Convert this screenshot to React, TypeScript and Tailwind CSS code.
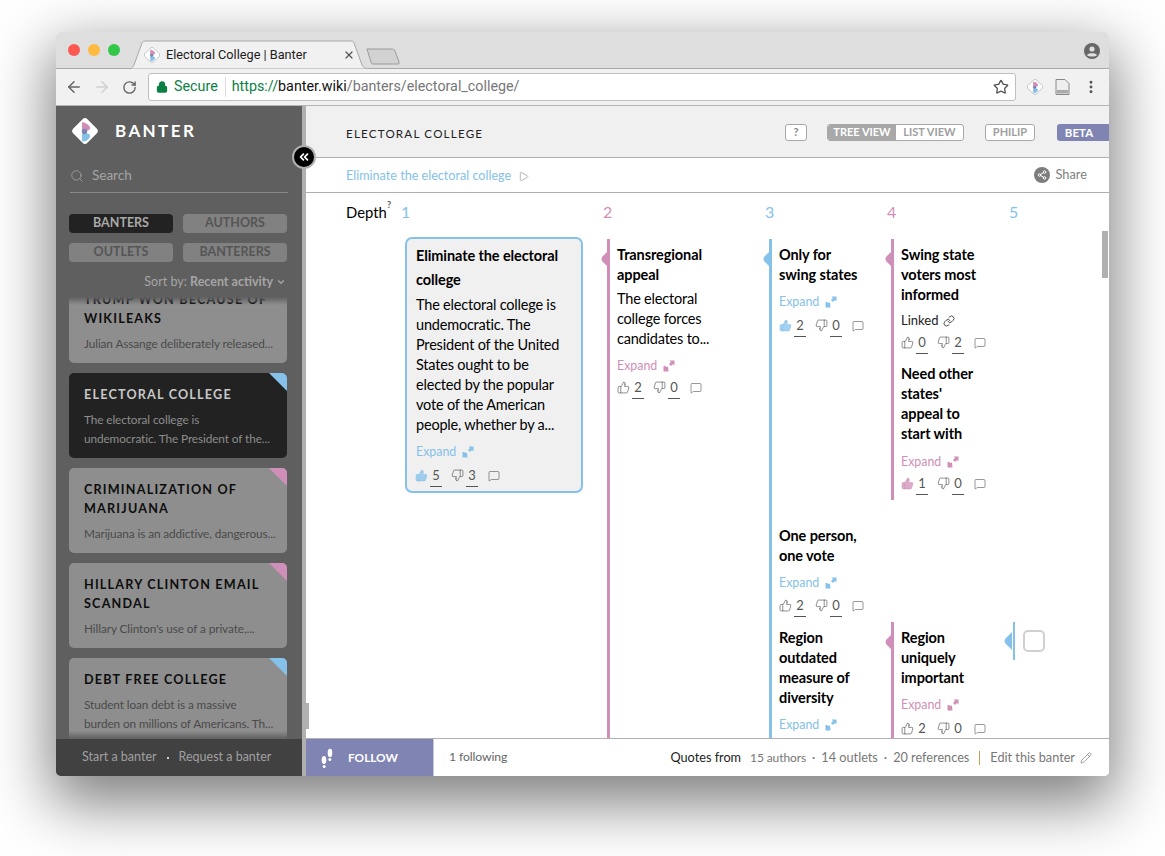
import React from "react";
import { ArrowLeft, ArrowRight, RotateCw, Lock, Star, MoreVertical, X, Search, ChevronDown, ThumbsUp, ThumbsDown, MessageSquare, Pencil, Link, Play, ChevronsLeft, Share2 } from "lucide-react";

const BLUE = "#85c1e9";
const PINK = "#cf8fb8";

function Logo({ size = 30 }: { size?: number }) {
  return (
    <svg width={size} height={size} viewBox="0 0 30 30">
      <rect x="5" y="5" width="20" height="20" rx="3.5" transform="rotate(45 15 15)" fill="#fff" stroke="#b5b5b5" strokeWidth={size < 25 ? 1.2 : 0} />
      <path d="M12 6.500 C14 5.500 18 8 20 11 C21 13 19 14.500 16 15 H12 Z" fill={PINK} />
      <path d="M12 17.500 H17 C20 17.500 21 20 19 22.500 C17 25 13 26.500 12 25 Z" fill={BLUE} />
      <circle cx="14.500" cy="15.500" r="2.700" fill="#7f84b3" />
    </svg>
  );
}

function ExpandIcon({ color }: { color: string }) {
  return (
    <svg width="12" height="12" viewBox="0 0 12 12" className="ml-[6px]">
      <path d="M6.500 0.500 H11.500 V5.500 L10 4 L8 6 L6 4 L8 2 Z" fill={color} />
      <path d="M0.500 6 L2 6 L3.500 7 L5 6.500 L5.500 11.500 H0.500 Z" fill={color} />
    </svg>
  );
}

function Expand({ color }: { color: string }) {
  return (
    <div className="flex items-center h-[20px] pt-[2px] text-[12.4px] leading-[18px]" style={{ color }}>
      Expand
      <ExpandIcon color={color} />
    </div>
  );
}

function Stats({ up, down, like, plain }: { up: number; down: number; like?: string; plain?: boolean }) {
  const num = plain
    ? "w-[12px] text-center text-[13px] leading-[16px] text-[#555]"
    : "w-[12px] text-center text-[13px] leading-[16px] text-[#555] border-b border-[#555] pb-[3px]";
  return (
    <div className="flex items-start h-[22px] text-[#555]">
      <ThumbsUp size={13} strokeWidth={1.1} className="mt-[2px]" color={like ? like : "#444"} fill={like ? like : "none"} fillOpacity={0.75} />
      <div className="ml-[2px] w-[12px] flex justify-center">
        <span className={num}>{up}</span>
      </div>
      <ThumbsDown size={13} strokeWidth={1.1} className="mt-[2px] ml-[9px]" color="#444" />
      <div className="ml-[2px] w-[12px] flex justify-center">
        <span className={num}>{down}</span>
      </div>
      <MessageSquare size={12} strokeWidth={1.1} className="mt-[3px] ml-[10px]" color="#444" />
    </div>
  );
}

function Title({ children }: { children: React.ReactNode }) {
  return <div className="text-[14.5px] tracking-[-0.1px] leading-[20px] font-bold text-black whitespace-nowrap">{children}</div>;
}

function Notch({ color, top = 11 }: { color: string; top?: number }) {
  return (
    <svg width="8" height="18" viewBox="0 0 8 18" className="absolute left-[-9px]" style={{ top }}>
      <path d="M8 0 V18 L1 11 Q0 9 1 7 Z" fill={color} />
    </svg>
  );
}

function SideCard({ title, body, active, corner }: { title: React.ReactNode; body: React.ReactNode; active?: boolean; corner?: string }) {
  return (
    <div className={`relative shrink-0 w-[218px] h-[85px] rounded-[5px] px-[15px] pt-[12px] overflow-hidden whitespace-nowrap ${active ? "bg-[#222222]" : "bg-[#8e8e8e]"}`}>
      <div className={`text-[12.6px] leading-[19px] font-bold tracking-[1.2px] ${active ? "text-[#c8c8c8]" : "text-[#0d0d0d]"}`}>{title}</div>
      <div className={`mt-[6px] text-[11.8px] tracking-[-0.1px] leading-[19px] ${active ? "text-[#8d8d8d]" : "text-[#4a4a4a]"}`}>{body}</div>
      {corner && (
        <svg width="18" height="18" viewBox="0 0 18 18" className="absolute top-0 right-0">
          <path d="M0 0 H18 V18 Z" fill={corner} />
        </svg>
      )}
    </div>
  );
}

function SideTab({ label, active }: { label: string; active?: boolean }) {
  return (
    <div className={`h-[19px] rounded-[4px] flex items-center justify-center text-[12.5px] font-bold ${active ? "bg-[#222222] text-[#a9a9a9]" : "bg-[#818181] text-[#555555]"}`}>
      {label}
    </div>
  );
}

export default function App() {
  return (
    <div className="w-[1165px] h-[856px] bg-white overflow-hidden pt-[32px] pl-[56px]" style={{ fontFamily: "Lato, sans-serif" }}>
      <div className="relative w-[1053px] h-[744px] rounded-[5px] overflow-hidden shadow-[0_22px_60px_6px_rgba(0,0,0,0.5)] flex flex-col">
        {/* tab strip */}
        <div className="h-[37px] shrink-0 bg-[#dedede] flex items-start border-b border-[#a8a8a8] relative">
          <div className="flex items-center gap-[8px] pl-[12px] pt-[12px]">
            <span className="w-[12px] h-[12px] rounded-full bg-[#fc5753]" />
            <span className="w-[12px] h-[12px] rounded-full bg-[#fdbc40]" />
            <span className="w-[12px] h-[12px] rounded-full bg-[#33c748]" />
          </div>
          <div className="absolute left-[72px] top-[8px] w-[242px] h-[29px]">
            <svg width="242" height="29" viewBox="0 0 242 29" className="absolute inset-0">
              <path d="M0 29 C4 29 5 27 6 25 L14 3 C15 1 16 1 18 1 H222 C224 1 225 1 226 3 L234 25 C235 27 237 29 242 29 Z" fill="#f1f1f1" stroke="#a8a8a8" />
            </svg>
            <div className="relative flex items-center h-[29px] pl-[15px]">
              <Logo size={18} />
              <span className="ml-[5px] text-[12.7px] text-[#1c1c1c] whitespace-nowrap" style={{ fontFamily: "Roboto, sans-serif" }}>Electoral College | Banter</span>
              <X size={12} strokeWidth={2.4} color="#555" className="absolute left-[215px] top-[9px]" />
            </div>
          </div>
          <svg width="36" height="18" viewBox="0 0 36 18" className="absolute left-[310px] top-[16px]">
            <path d="M1 1 H25 C27 1 28 1 29 3 L33 14 C33.500 16 33 16 31 16 H8 C6 16 6 16 5 14 Z" fill="#d2d2d2" stroke="#9a9a9a" />
          </svg>
          <svg width="16" height="16" viewBox="0 0 16 16" className="absolute right-[9px] top-[11px]">
            <circle cx="8" cy="8" r="8" fill="#666" />
            <circle cx="8" cy="6" r="2.600" fill="#dedede" />
            <path d="M3 12 C3.500 9.800 12.500 9.800 13 12 C11.500 14 4.500 14 3 12 Z" fill="#dedede" />
          </svg>
        </div>
        {/* toolbar */}
        <div className="h-[37px] shrink-0 bg-[#f1f1f1] border-b border-[#b5b5b5] flex items-center">
          <ArrowLeft size={18} strokeWidth={2} color="#666" className="ml-[9px]" />
          <ArrowRight size={18} strokeWidth={2} color="#cfcfcf" className="ml-[10px]" />
          <RotateCw size={15} strokeWidth={2.2} color="#666" className="ml-[11px]" />
          <div className="ml-[11px] w-[868px] h-[28px] bg-white rounded-[3px] border border-[#bfbfbf] flex items-center text-[14.3px] whitespace-nowrap" style={{ fontFamily: "Roboto, sans-serif" }}>
            <Lock size={12} strokeWidth={2.6} color="#0b8043" fill="#0b8043" className="ml-[7px]" />
            <span className="ml-[6px] text-[#0b8043]">Secure</span>
            <span className="ml-[7px] mr-[6px] w-px h-[20px] bg-[#dcdcdc]" />
            <span className="text-[#0b8043]">https://</span>
            <span className="text-[#111]">banter.wiki</span>
            <span className="text-[#777]">/banters/electoral_college/</span>
            <Star size={16} strokeWidth={2} color="#555" className="ml-auto mr-[6px]" />
          </div>
          <div className="ml-[10px]"><Logo size={18} /></div>
          <svg width="15" height="16" viewBox="0 0 15 16" className="ml-[11px]">
            <path d="M1 .5 H10 L14 4.500 V15.500 H1 Z" fill="#eee" stroke="#888" />
            <rect x="2" y="11" width="11" height="3.500" fill="#aaa" />
          </svg>
          <MoreVertical size={16} strokeWidth={2.4} color="#555" className="ml-[13px]" />
        </div>
        {/* app */}
        <div className="flex-1 min-h-0 flex relative">
          {/* sidebar */}
          <div className="w-[250px] shrink-0 bg-[#5f5f5f] border-r-[4px] border-[#b0b0b0] flex flex-col">
            <div className="h-[50px] shrink-0 flex items-center pl-[14px]">
              <Logo size={30} />
              <span className="ml-[15px] text-[17px] font-bold tracking-[2.4px] text-white">BANTER</span>
            </div>
            <div className="mx-[14px] h-[37px] pt-[3px] shrink-0 border-b border-[#8a8a8a] flex items-center text-[#a5a5a5] text-[13.5px]">
              <Search size={14} strokeWidth={1.4} />
              <span className="ml-[8px]">Search</span>
            </div>
            <div className="ml-[13px] mr-[15px] mt-[21px] grid grid-cols-2 gap-x-[10px] gap-y-[10px] shrink-0">
              <SideTab label="BANTERS" active />
              <SideTab label="AUTHORS" />
              <SideTab label="OUTLETS" />
              <SideTab label="BANTERERS" />
            </div>
            <div className="h-[20px] mt-[10px] shrink-0 pr-[16px] flex items-center justify-end text-[12.5px] text-[#a5a5a5] whitespace-nowrap">
              Sort by:&nbsp;<span className="font-bold">Recent activity</span>
              <ChevronDown size={10} strokeWidth={3} className="ml-[3px]" />
            </div>
            <div className="relative flex-1 min-h-0 mt-[5px] overflow-hidden px-[13px]">
              <div className="flex flex-col gap-[10px] mt-[-19px]">
                <SideCard title={<>TRUMP WON BECAUSE OF<br />WIKILEAKS</>} body="Julian Assange deliberately released..." />
                <SideCard active corner={BLUE} title="ELECTORAL COLLEGE" body={<>The electoral college is<br />undemocratic. The President of the...</>} />
                <SideCard corner={PINK} title={<>CRIMINALIZATION OF<br />MARIJUANA</>} body="Marijuana is an addictive, dangerous..." />
                <SideCard corner={PINK} title={<>HILLARY CLINTON EMAIL<br />SCANDAL</>} body="Hillary Clinton's use of a private,..." />
                <SideCard corner={BLUE} title="DEBT FREE COLLEGE" body={<>Student loan debt is a massive<br />burden on millions of Americans. Th...</>} />
              </div>
              <div className="absolute top-0 inset-x-0 h-[8px] bg-gradient-to-b from-[#5f5f5f] to-transparent" />
              <div className="absolute bottom-0 inset-x-0 h-[8px] bg-gradient-to-t from-[#5f5f5f] to-transparent" />
            </div>
            <div className="h-[37px] shrink-0 bg-[#414141] flex items-center pl-[26px] text-[12.5px] text-[#a0a0a0] whitespace-nowrap">
              Start a banter
              <span className="mx-[10px] w-[2px] h-[2px] rounded-full bg-white" />
              Request a banter
            </div>
          </div>
          {/* main */}
          <div className="flex-1 min-w-0 flex flex-col bg-white relative">
            <div className="h-[52px] shrink-0 bg-[#f0f0f0] border-b border-[#b0b0b0] flex items-center pl-[40px] pt-[2px]">
              <span className="text-[11.6px] tracking-[1.2px] mt-[2px] text-[#222] whitespace-nowrap">ELECTORAL COLLEGE</span>
              <div className="ml-auto flex items-center text-[11px] font-bold whitespace-nowrap">
                <div className="w-[22px] h-[17px] border border-[#a8a8a8] bg-white rounded-[3px] text-[#888] flex items-center justify-center">?</div>
                <div className="ml-[20px] w-[137px] h-[17px] border border-[#a8a8a8] rounded-[3px] bg-white flex overflow-hidden">
                  <div className="w-[68px] bg-[#a8a8a8] text-white flex items-center justify-center">TREE VIEW</div>
                  <div className="flex-1 text-[#a0a0a0] flex items-center justify-center">LIST VIEW</div>
                </div>
                <div className="ml-[21px] w-[50px] h-[17px] border border-[#a8a8a8] bg-white rounded-[3px] text-[#a0a0a0] flex items-center justify-center">PHILIP</div>
                <div className="ml-[22px] w-[52px] h-[17px] pr-[8px] text-[11.5px] bg-[#7f84b3] rounded-l-[3px] text-white flex items-center justify-center">BETA</div>
              </div>
            </div>
            <div className="h-[35px] shrink-0 border-b border-[#b0b0b0] flex items-center pl-[40px] pr-[22px] text-[12.6px]">
              <span className="whitespace-nowrap mt-[3px]" style={{ color: BLUE }}>Eliminate the electoral college</span>
              <Play size={11} strokeWidth={1.2} color="#777" className="ml-[7px] mt-[2px]" />
              <div className="ml-auto flex items-center text-[#808080] text-[12.8px]">
                <span className="w-[16px] h-[16px] rounded-full bg-[#7d7d7d] flex items-center justify-center">
                  <Share2 size={10} strokeWidth={2.4} color="#fff" />
                </span>
                <span className="ml-[6px]">Share</span>
              </div>
            </div>
            <div className="flex-1 min-h-0 overflow-hidden relative">
              <div className="h-[38px] flex items-center pl-[40px] text-[16px] text-black whitespace-nowrap">
                <span className="w-[55px] relative text-[14.8px]">Depth<span className="absolute left-[41px] top-[-2px] text-[9px] leading-[12px] font-bold text-[#555]">?</span></span>
                <span className="w-[202px] text-[#85c1e9]">1</span>
                <span className="w-[162px] text-[#cf8fb8]">2</span>
                <span className="w-[122px] text-[#85c1e9]">3</span>
                <span className="w-[122px] text-[#cf8fb8]">4</span>
                <span className="text-[#85c1e9]">5</span>
              </div>
              <div className="flex items-start pl-[99px] mt-[6px]">
                {/* depth 1 */}
                <div className="w-[178px] h-[256px] shrink-0 rounded-[7px] border-[2px] border-[#85c1e9] bg-[#f0f0f0] pl-[9px] pt-[5px] whitespace-nowrap">
                  <div className="text-[14.5px] tracking-[-0.1px] leading-[24px] font-bold text-black">Eliminate the electoral<br />college</div>
                  <div className="mt-[3px] text-[14.5px] tracking-[-0.2px] leading-[20px] text-black">
                    The electoral college is<br />undemocratic. The<br />President of the United<br />States ought to be<br />elected by the popular<br />vote of the American<br />people, whether by a...
                  </div>
                  <div className="mt-[6px]"><Expand color={BLUE} /></div>
                  <div className="mt-[6px] ml-[-1px]"><Stats up={5} down={3} like={BLUE} /></div>
                </div>
                {/* depth 2 */}
                <div className="relative ml-[24px] mt-[2px] w-[162px] h-[520px] shrink-0 border-l-[3px] border-[#cf8fb8] pl-[7px] pt-[6px] whitespace-nowrap">
                  <Notch color={PINK} />
                  <Title>Transregional<br />appeal</Title>
                  <div className="mt-[4px] text-[14.5px] tracking-[-0.2px] leading-[20px] text-black">The electoral<br />college forces<br />candidates to...</div>
                  <div className="mt-[6px]"><Expand color={PINK} /></div>
                  <div className="mt-[4px]"><Stats up={2} down={0} /></div>
                </div>
                {/* depth 3 */}
                <div className="relative mt-[2px] w-[300px] h-[520px] shrink-0 border-l-[3px] border-[#85c1e9] flex flex-col">
                  <Notch color={BLUE} />
                  <div className="flex h-[286px] shrink-0">
                    <div className="w-[119px] shrink-0 pl-[7px] pt-[6px]">
                      <Title>Only for<br />swing states</Title>
                      <div className="mt-[6px]"><Expand color={BLUE} /></div>
                      <div className="mt-[6px]"><Stats up={2} down={0} like={BLUE} /></div>
                    </div>
                    <div className="relative w-[122px] h-[261px] border-l-[3px] border-[#cf8fb8] pl-[7px] pt-[6px]">
                      <Notch color={PINK} />
                      <Title>Swing state<br />voters most<br />informed</Title>
                      <div className="mt-[6px] h-[20px] flex items-center text-[13px] text-[#222]">
                        Linked
                        <Link size={12} strokeWidth={1.6} className="ml-[5px]" />
                      </div>
                      <div className="mt-[3px]"><Stats up={0} down={2} /></div>
                      <div className="mt-[8px]"><Title>Need other<br />states'<br />appeal to<br />start with</Title></div>
                      <div className="mt-[7px]"><Expand color={PINK} /></div>
                      <div className="mt-[4px]"><Stats up={1} down={0} like={PINK} /></div>
                    </div>
                  </div>
                  <div className="pl-[7px] pt-[1px] h-[97px] shrink-0">
                    <Title>One person,<br />one vote</Title>
                    <div className="mt-[6px]"><Expand color={BLUE} /></div>
                    <div className="mt-[5px]"><Stats up={2} down={0} /></div>
                  </div>
                  <div className="flex flex-1 min-h-0">
                    <div className="w-[119px] shrink-0 pl-[7px] pt-[6px]">
                      <Title>Region<br />outdated<br />measure of<br />diversity</Title>
                      <div className="mt-[6px]"><Expand color={BLUE} /></div>
                    </div>
                    <div className="relative w-[122px] border-l-[3px] border-[#cf8fb8] pl-[7px] pt-[6px]">
                      <Notch color={PINK} />
                      <Title>Region<br />uniquely<br />important</Title>
                      <div className="mt-[6px]"><Expand color={PINK} /></div>
                      <div className="mt-[6px]"><Stats up={2} down={0} plain /></div>
                    </div>
                    <div className="relative w-[2px] h-[38px] bg-[#85c1e9] ml-0">
                      <Notch color={BLUE} top={10} />
                    </div>
                    <div className="ml-[8px] mt-[8px] w-[22px] h-[22px] rounded-[5px] border-[2px] border-[#d0d0d0] bg-white" />
                  </div>
                </div>
              </div>
              <div className="absolute right-[1px] top-[38px] w-[6px] h-[47px] bg-[#b0b0b0]" />
            </div>
            {/* footer */}
            <div className="h-[38px] shrink-0 border-t border-[#b0b0b0] flex items-center bg-white text-[12.7px] whitespace-nowrap pr-[17px]">
              <div className="w-[128px] h-full bg-[#7f84b3] border-r border-[#c5c7dc] flex items-center pl-[14px] text-white font-bold text-[11.8px]">
                <svg width="14" height="22" viewBox="0 0 14 22" fill="#fff">
                  <ellipse cx="4" cy="13" rx="2.300" ry="4" />
                  <ellipse cx="4.200" cy="19.500" rx="1.500" ry="1.500" />
                  <ellipse cx="10" cy="6" rx="2.300" ry="4.200" />
                  <ellipse cx="9.800" cy="12.500" rx="1.500" ry="1.500" />
                </svg>
                <span className="ml-[14px]">FOLLOW</span>
              </div>
              <span className="ml-[15px] text-[12.2px] tracking-[-0.1px] text-[#666]">1 following</span>
              <span className="ml-auto text-[#222]">Quotes from</span>
              <span className="ml-[9px] text-[12px] tracking-[-0.1px] text-[#777]">15 authors</span>
              <span className="mx-[6px] text-[#777]">·</span>
              <span className="text-[#777]">14 outlets</span>
              <span className="mx-[6px] text-[#777]">·</span>
              <span className="text-[#777]">20 references</span>
              <span className="mx-[10px] w-px h-[14px] bg-[#c9a050]" />
              <span className="text-[#777]">Edit this banter</span>
              <Pencil size={12} strokeWidth={1.2} color="#666" className="ml-[5px]" />
            </div>
          </div>
          {/* collapse handle */}
          <div className="absolute left-[236px] top-[39px] w-[24px] h-[24px] rounded-full bg-black border-[2px] border-[#b0b0b0] flex items-center justify-center">
            <ChevronsLeft size={14} strokeWidth={3} color="#fff" />
          </div>
          <div className="absolute left-[250px] top-[597px] w-[3px] h-[26px] bg-[#b0b0b0]" />
        </div>
      </div>
    </div>
  );
}
